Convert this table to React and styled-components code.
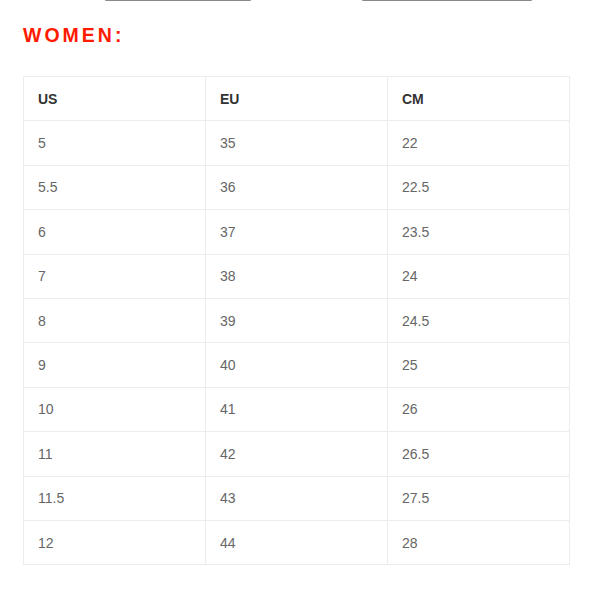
import React from 'react';
import styled, { createGlobalStyle } from 'styled-components';

const sizes = [
  ['5', '35', '22'],
  ['5.5', '36', '22.5'],
  ['6', '37', '23.5'],
  ['7', '38', '24'],
  ['8', '39', '24.5'],
  ['9', '40', '25'],
  ['10', '41', '26'],
  ['11', '42', '26.5'],
  ['11.5', '43', '27.5'],
  ['12', '44', '28'],
];

function App() {
  return (
    <>
      <GlobalStyle />
      <Page>
        <TabEdges>
          <TabEdge $left={105} $width={146} />
          <TabEdge $left={362} $width={170} />
        </TabEdges>
        <Title>WOMEN:</Title>
        <SizeTable>
          <thead>
            <tr>
              <HeadCell>US</HeadCell>
              <HeadCell>EU</HeadCell>
              <HeadCell>CM</HeadCell>
            </tr>
          </thead>
          <tbody>
            {sizes.map((row) => (
              <tr key={row[0]}>
                {row.map((v, i) => (
                  <Cell key={i}>{v}</Cell>
                ))}
              </tr>
            ))}
          </tbody>
        </SizeTable>
      </Page>
    </>
  );
}

const GlobalStyle = createGlobalStyle`
  body {
    margin: 0;
    background: #fff;
    font-family: "Liberation Sans", Arial, sans-serif;
  }
`;

const Page = styled.div`
  width: 600px;
  height: 600px;
  padding: 0 30px 0 23px;
  box-sizing: border-box;
`;

const TabEdges = styled.div`
  display: flex;
  height: 2px;
  margin-left: -23px;
`;

const TabEdge = styled.div`
  margin-left: ${(p) => p.$left}px;
  width: ${(p) => p.$width}px;
  height: 1px;
  background: #8a8a8a;
  border-radius: 0 0 2px 2px;
  & + & {
    margin-left: ${(p) => p.$left - 251}px;
  }
`;

const Title = styled.h2`
  margin: 21px 0 28px;
  font-size: 19.5px;
  line-height: 25px;
  font-weight: bold;
  letter-spacing: 3px;
  color: #ff1a00;
`;

const SizeTable = styled.table`
  width: 547px;
  border-collapse: collapse;
  table-layout: fixed;
`;

const HeadCell = styled.th`
  height: 43.4px;
  padding: 0 0 0 14px;
  border: 1px solid #ececec;
  text-align: left;
  font-size: 14px;
  font-weight: bold;
  color: #333;
`;

const Cell = styled.td`
  height: 43.4px;
  padding: 0 0 0 14px;
  border: 1px solid #ececec;
  font-size: 14px;
  color: #666;
`;

export default App;
